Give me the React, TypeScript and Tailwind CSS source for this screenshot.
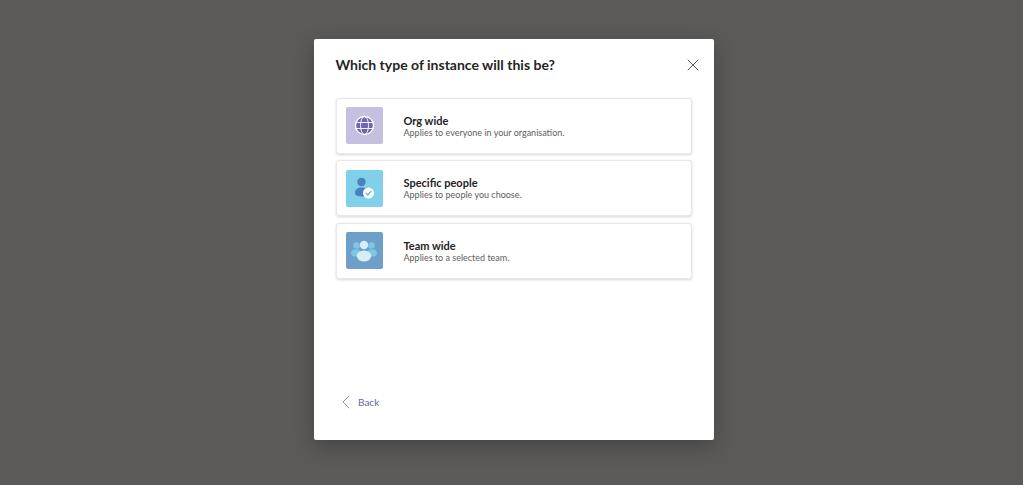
import { ChevronLeft, X } from "lucide-react";
import type { ReactNode } from "react";

function GlobeIcon() {
  return (
    <svg width="21" height="21" viewBox="0 0 21 21" fill="none">
      <circle cx="10.5" cy="10.5" r="9" fill="#7264b0" stroke="#ffffff" strokeWidth="1.3" />
      <ellipse cx="10.5" cy="10.5" rx="4" ry="9" stroke="#ffffff" strokeWidth="0.9" />
      <path d="M1.5 7.5h18M1.5 13.5h18" stroke="#ffffff" strokeWidth="0.9" />
    </svg>
  );
}

function PersonCheckIcon() {
  return (
    <svg width="24" height="24" viewBox="0 0 24 24" fill="none">
      <circle cx="9.500" cy="6" r="4.200" fill="#4a80bd" />
      <path d="M3 17c0-3.500 2.500-5.500 6.500-5.500s6.500 2 6.500 5.500c0 2-2.500 3.500-6.500 3.500s-6.500-1.500-6.500-3.500z" fill="#4a80bd" />
      <circle cx="16.500" cy="17" r="5.500" fill="#ffffff" />
      <path d="M14 17.200l1.800 1.800 3.200-3.600" stroke="#5fb4d8" strokeWidth="1.200" strokeLinecap="round" strokeLinejoin="round" />
    </svg>
  );
}

function TeamIcon() {
  return (
    <svg width="26" height="22" viewBox="0 0 26 22" fill="none">
      <circle cx="5.500" cy="5.500" r="3.200" fill="#7cc8e4" />
      <circle cx="20.500" cy="5.500" r="3.200" fill="#7cc8e4" />
      <ellipse cx="5" cy="13" rx="5" ry="3.800" fill="#7cc8e4" />
      <ellipse cx="21" cy="13" rx="5" ry="3.800" fill="#7cc8e4" />
      <circle cx="13" cy="5" r="4.200" fill="#d6eef7" />
      <ellipse cx="13" cy="16" rx="7.200" ry="5.500" fill="#d6eef7" />
    </svg>
  );
}

function OptionCard({ tile, icon, title, text }: { tile: string; icon: ReactNode; title: string; text: string }) {
  return (
    <div className="flex h-[56px] items-center rounded-[3px] border border-[#e8e8e8] bg-white pl-[9px] shadow-[0_1px_3px_rgba(0,0,0,0.16)]">
      <div className={`flex h-[37px] w-[37px] shrink-0 items-center justify-center rounded-[2px] ${tile}`}>{icon}</div>
      <div className="ml-[21px] flex flex-col">
        <span className="text-[11px] leading-[13px] font-bold text-[#252423]">{title}</span>
        <span className="text-[9px] leading-[11px] text-[#605e5c]">{text}</span>
      </div>
    </div>
  );
}

export default function App() {
  return (
    <div
      className="flex h-[485px] items-start overflow-hidden bg-[#5b5a58] pt-[39px] pl-[314px]"
      style={{ fontFamily: 'Lato, "Open Sans", sans-serif' }}
    >
      <div className="flex h-[401px] w-[400px] flex-col rounded-[2px] bg-white pr-[22px] pl-[21.500px] shadow-[0_6px_20px_rgba(0,0,0,0.25)]">
        <div className="flex h-[52px] shrink-0 items-center justify-between">
          <h1 className="text-[14px] leading-[18px] font-bold text-[#252423]">Which type of instance will this be?</h1>
          <X className="-mr-[11px] h-[20px] w-[20px] text-[#605e5c]" strokeWidth={1.2} />
        </div>
        <div className="flex flex-col gap-[6.600px] pt-[6.500px]">
          <OptionCard
            tile="bg-[#c5c0e0]"
            icon={<GlobeIcon />}
            title="Org wide"
            text="Applies to everyone in your organisation."
          />
          <OptionCard
            tile="bg-[#7fd0e8]"
            icon={<PersonCheckIcon />}
            title="Specific people"
            text="Applies to people you choose."
          />
          <OptionCard
            tile="bg-[#6e9fc9]"
            icon={<TeamIcon />}
            title="Team wide"
            text="Applies to a selected team."
          />
        </div>
        <div className="mt-auto mb-[26px] -ml-[1.500px] flex items-center">
          <ChevronLeft className="h-[24px] w-[24px] text-[#8b88c4]" strokeWidth={1} />
          <span className="text-[10px] leading-[13px] text-[#6264a7]">Back</span>
        </div>
      </div>
    </div>
  );
}
